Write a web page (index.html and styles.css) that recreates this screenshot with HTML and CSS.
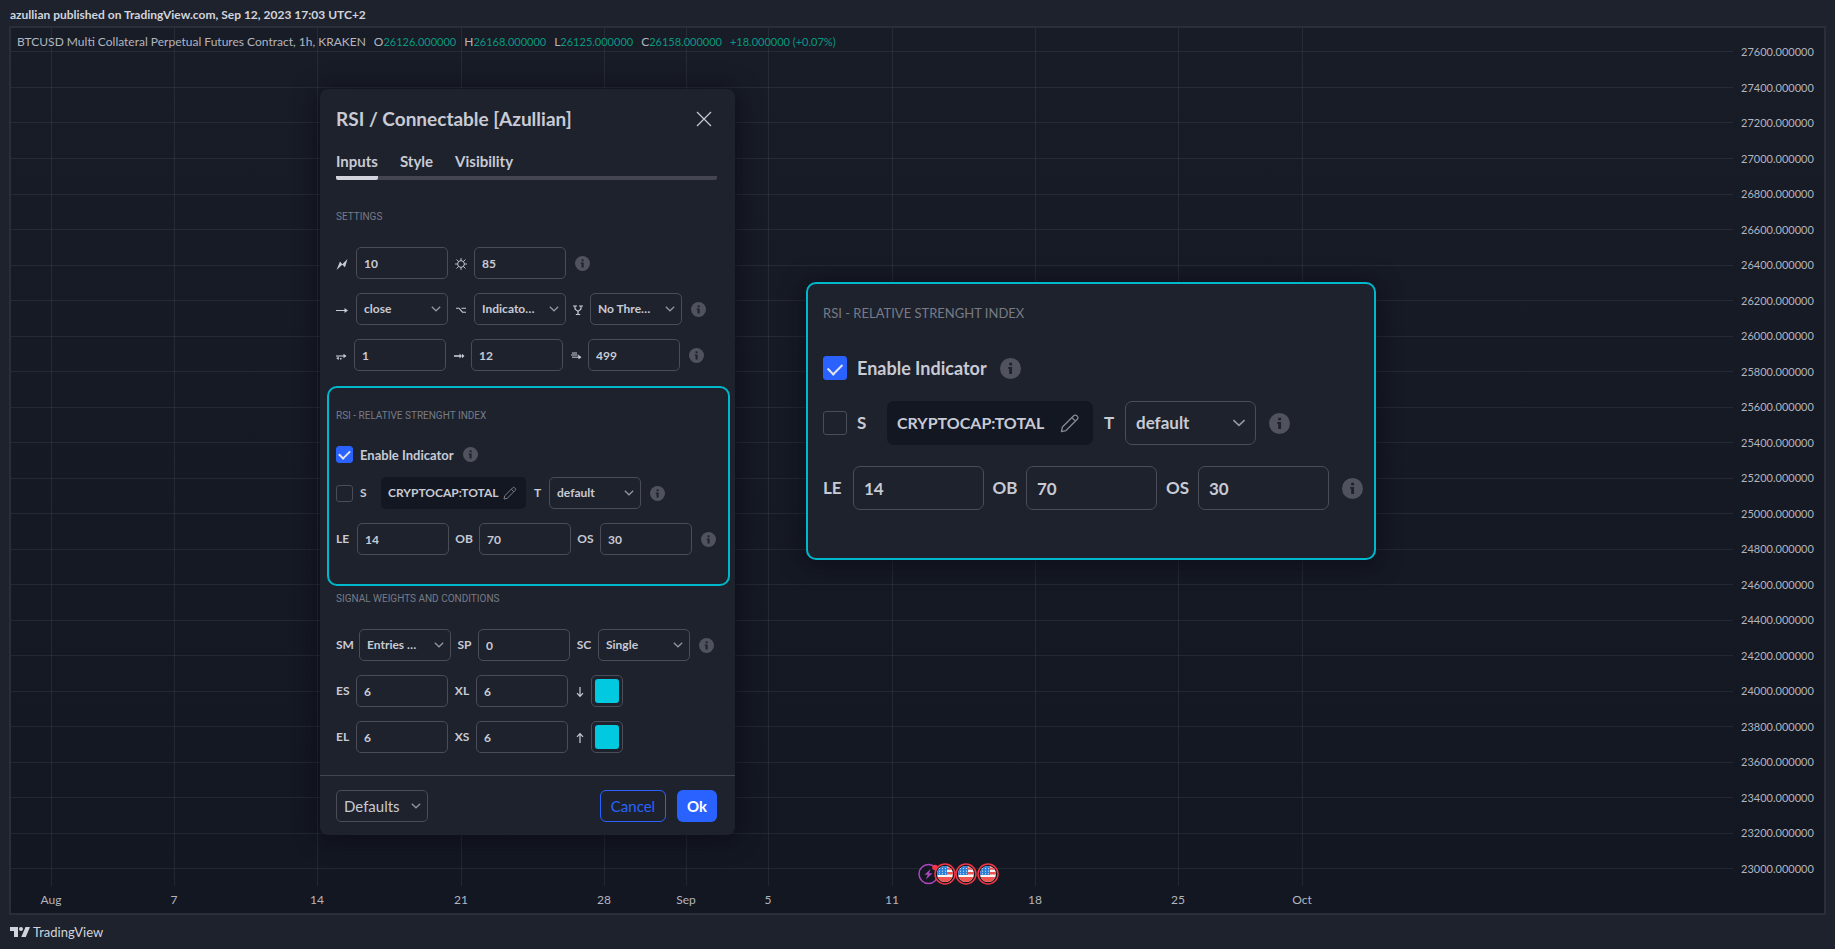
FILE: index.html
```html
<!DOCTYPE html>
<html lang="en">
<head>
<meta charset="utf-8">
<title>BTCUSD – RSI / Connectable [Azullian]</title>
<link rel="stylesheet" href="styles.css">
</head>
<body>
<svg class="sprite" aria-hidden="true">
  <symbol id="info" viewBox="0 0 16 16"><circle cx="8" cy="8" r="8" fill="#50535e"/><rect x="7" y="3.6" width="2.2" height="2" fill="#1e222d"/><path d="M6.2 6.8h3v5.4H7V8.2h-.8z" fill="#1e222d"/></symbol>
  <symbol id="chevron" viewBox="0 0 10 6"><path d="M.8.8 5 4.8 9.2.8" fill="none" stroke="currentColor" stroke-width="1.2"/></symbol>
  <symbol id="pencil" viewBox="0 0 14 14"><path d="M1 13l.7-3.2 7.9-7.9a1.5 1.5 0 0 1 2.2 0l.3.3a1.5 1.5 0 0 1 0 2.2L4.200 12.300zM8.300 3.200l2.500 2.500" fill="none" stroke="currentColor" stroke-width=".9" stroke-linejoin="round"/></symbol>
  <symbol id="bolt" viewBox="0 0 12 12"><path d="M.5 12 4 3.500 6.300 6.300 11.500 1 9 9.300 6.200 6.800z" fill="currentColor"/></symbol>
  <symbol id="gear" viewBox="0 0 12 12"><circle cx="6" cy="6" r="3.400" fill="none" stroke="currentColor"/><path d="M6 0v2.500M6 9.500V12M0 6h2.500M9.500 6H12M1.500 1.500l2 2M8.500 8.500l2 2M10.500 1.500l-2 2M3.500 8.500l-2 2" stroke="currentColor" stroke-width=".9"/></symbol>
  <symbol id="arrow" viewBox="0 0 12 12"><path d="M0 6.500h10" stroke="currentColor" stroke-width="1"/><path d="M8.500 4 12 6.500 8.500 9z" fill="currentColor"/></symbol>
  <symbol id="option" viewBox="0 0 12 12"><path d="M1 4.200h3l3.500 4H11M6.500 4.200H11" fill="none" stroke="currentColor" stroke-width="1.100"/></symbol>
  <symbol id="fork" viewBox="0 0 12 12"><path d="M1 2h4M7 2h4M3 2v2.500C3 6.500 6 6 6 8v2M9 2v2.500C9 6.500 6 6 6 8M3.800 10.500h4.400" fill="none" stroke="currentColor" stroke-width="1.200"/></symbol>
  <symbol id="swap" viewBox="0 0 12 12"><path d="M0 6h9" stroke="currentColor" stroke-width="1.100"/><path d="M7.500 3.700l3 2.300-3 2.300z" fill="currentColor"/><path d="M2.800 6.500v3.500L.2 8.200zM4 8h1.500v1.400H4z" fill="currentColor"/></symbol>
  <symbol id="thick" viewBox="0 0 12 12"><path d="M1 6h6" stroke="currentColor" stroke-width="1.600"/><path d="M6.500 3.500 9 6 6.500 8.500zM9 3.800 11.500 6 9 8.200z" fill="currentColor"/></symbol>
  <symbol id="double" viewBox="0 0 12 12"><path d="M2 3h5M1 5h6.500M2 7.200h7" stroke="currentColor" stroke-width="1"/><path d="M8 4.500 11.500 7.200 8.500 9.200z" fill="currentColor"/></symbol>
  <symbol id="down" viewBox="0 0 12 12"><path d="M6 1v9M3 7.200l3 3.200 3-3.200" fill="none" stroke="currentColor" stroke-width="1.200"/></symbol>
  <symbol id="up" viewBox="0 0 12 12"><path d="M6 11V2M3 4.800l3-3.200 3 3.200" fill="none" stroke="currentColor" stroke-width="1.200"/></symbol>
  <symbol id="flag" viewBox="0 0 22 22">
    <circle cx="11" cy="11" r="10" fill="#131722" stroke="#f23645" stroke-width="1.500"/>
    <g clip-path="url(#disc)"><path fill="#f5f5f5" d="M3 3h16v16H3z"/><path fill="#ef5350" d="M12 4.500h7v2.300h-7zM12 9h7v2.500h-7zM3 14h16v5H3z"/><path fill="#2f80d8" d="M3 3h10v9H3z"/><path stroke="#e6f0fa" stroke-width=".9" stroke-dasharray="1 2" d="M5 5.500h8M5 8.200h8M5 10.800h8"/></g>
  </symbol>
  <clipPath id="disc"><circle cx="11" cy="11" r="8"/></clipPath>
</svg>

<header class="published">azullian published on TradingView.com, Sep 12, 2023 17:03 UTC+2</header>

<main class="chart">
  <section class="plot" aria-label="Chart">
    <svg class="grid" viewBox="0 0 1722 858" preserveAspectRatio="none" aria-hidden="true">
      <path d="M40.500 0V858M163.500 0V858M306.500 0V858M450.500 0V858M593.500 0V858M675.500 0V858M757.500 0V858M881.500 0V858M1024.500 0V858M1167.500 0V858M1291.500 0V858"/>
      <path d="M0 23.500H1722M0 59.500H1722M0 94.500H1722M0 130.500H1722M0 166.500H1722M0 201.500H1722M0 237.500H1722M0 272.500H1722M0 308.500H1722M0 343.500H1722M0 379.500H1722M0 414.500H1722M0 450.500H1722M0 485.500H1722M0 521.500H1722M0 556.500H1722M0 592.500H1722M0 627.500H1722M0 663.500H1722M0 698.500H1722M0 734.500H1722M0 769.500H1722M0 805.500H1722M0 840.500H1722"/>
    </svg>
    <div class="legend">
      <span class="legend-name">BTCUSD Multi Collateral Perpetual Futures Contract, 1h, KRAKEN</span>
      <span>O<b>26126.000000</b></span>
      <span>H<b>26168.000000</b></span>
      <span>L<b>26125.000000</b></span>
      <span>C<b>26158.000000</b></span>
      <span><b>+18.000000 (+0.07%)</b></span>
    </div>
    <svg class="events" viewBox="0 0 82 24" aria-hidden="true">
      <circle cx="11.500" cy="12" r="9.500" fill="#131722" stroke="#ab47bc" stroke-width="1.500"/>
      <path d="M13.500 7 7.500 12.800h3.200L9 17.500l6.500-6.200h-3.400z" fill="#ab47bc"/>
      <circle cx="18" cy="5.500" r="2.800" fill="#f23645"/>
      <use href="#flag" x="17" y="1" width="22" height="22"/>
      <use href="#flag" x="38" y="1" width="22" height="22"/>
      <use href="#flag" x="60" y="1" width="22" height="22"/>
    </svg>
  </section>
  <div class="prices">
    <span>27600.000000</span><span>27400.000000</span><span>27200.000000</span><span>27000.000000</span><span>26800.000000</span><span>26600.000000</span><span>26400.000000</span><span>26200.000000</span><span>26000.000000</span><span>25800.000000</span><span>25600.000000</span><span>25400.000000</span><span>25200.000000</span><span>25000.000000</span><span>24800.000000</span><span>24600.000000</span><span>24400.000000</span><span>24200.000000</span><span>24000.000000</span><span>23800.000000</span><span>23600.000000</span><span>23400.000000</span><span>23200.000000</span><span>23000.000000</span>
  </div>
  <div class="times">
    <i></i><span>Aug</span><span>7</span><span>14</span><span>21</span><span>28</span><span>Sep</span><span>5</span><span>11</span><span>18</span><span>25</span><span>Oct</span>
  </div>
</main>

<footer class="brand">
  <svg width="20" height="10" viewBox="0 0 20 10" aria-hidden="true"><path d="M0 0h8v10H4V4H0z" fill="currentColor"/><circle cx="11" cy="2" r="2" fill="currentColor"/><path d="M15.500 0H20l-4.200 10h-4.500z" fill="currentColor"/></svg>
  <span>TradingView</span>
</footer>

<form class="dialog" aria-labelledby="dlg-title">
  <div class="dialog-head">
    <h1 id="dlg-title">RSI / Connectable [Azullian]</h1>
    <button type="button" class="close" aria-label="Close"><svg width="16" height="16" viewBox="0 0 16 16"><path d="M1 1l14 14M15 1 1 15" stroke="currentColor" stroke-width="1.200"/></svg></button>
  </div>
  <nav class="tabs">
    <button type="button" class="tab active">Inputs</button>
    <button type="button" class="tab">Style</button>
    <button type="button" class="tab">Visibility</button>
  </nav>

  <section class="group settings">
    <h2>SETTINGS</h2>
    <div class="row cols-a">
      <label for="a1" aria-label="Speed"><svg class="glyph"><use href="#bolt"/></svg></label><input class="box" id="a1" value="10">
      <label for="a2" aria-label="Brightness"><svg class="glyph"><use href="#gear"/></svg></label><input class="box" id="a2" value="85">
      <svg class="info"><use href="#info"/></svg>
    </div>
    <div class="row cols-a">
      <label for="b1" aria-label="Source"><svg class="glyph"><use href="#arrow"/></svg></label><span class="pick"><select class="box" id="b1"><option>close</option></select><svg><use href="#chevron"/></svg></span>
      <label for="b2" aria-label="Mode"><svg class="glyph"><use href="#option"/></svg></label><span class="pick"><select class="box" id="b2"><option>Indicato…</option></select><svg><use href="#chevron"/></svg></span>
      <label for="b3" aria-label="Threshold"><svg class="glyph"><use href="#fork"/></svg></label><span class="pick"><select class="box" id="b3"><option>No Thre…</option></select><svg><use href="#chevron"/></svg></span>
      <svg class="info"><use href="#info"/></svg>
    </div>
    <div class="row cols-b">
      <label for="c1" aria-label="From"><svg class="glyph"><use href="#swap"/></svg></label><input class="box" id="c1" value="1">
      <label for="c2" aria-label="To"><svg class="glyph"><use href="#thick"/></svg></label><input class="box" id="c2" value="12">
      <label for="c3" aria-label="Limit"><svg class="glyph"><use href="#double"/></svg></label><input class="box" id="c3" value="499">
      <svg class="info"><use href="#info"/></svg>
    </div>
  </section>

  <section class="group highlight">
    <h2>RSI - RELATIVE STRENGHT INDEX</h2>
    <div class="line enable"><input type="checkbox" id="d1" checked><label for="d1">Enable Indicator</label><svg class="info"><use href="#info"/></svg></div>
    <div class="line">
      <input type="checkbox" id="d2"><label for="d2" class="s-label">S</label>
      <button type="button" class="symbol">CRYPTOCAP:TOTAL<svg><use href="#pencil"/></svg></button>
      <label for="d3" class="t-label">T</label><span class="pick"><select class="box" id="d3"><option>default</option></select><svg><use href="#chevron"/></svg></span>
      <svg class="info"><use href="#info"/></svg>
    </div>
    <div class="row cols-c">
      <label for="e1">LE</label><input class="box" id="e1" value="14">
      <label for="e2">OB</label><input class="box" id="e2" value="70">
      <label for="e3">OS</label><input class="box" id="e3" value="30">
      <svg class="info"><use href="#info"/></svg>
    </div>
  </section>

  <section class="group signals">
    <h2>SIGNAL WEIGHTS AND CONDITIONS</h2>
    <div class="row cols-d">
      <label for="f1">SM</label><span class="pick"><select class="box" id="f1"><option>Entries …</option></select><svg><use href="#chevron"/></svg></span>
      <label for="f2">SP</label><input class="box" id="f2" value="0">
      <label for="f3">SC</label><span class="pick"><select class="box" id="f3"><option>Single</option></select><svg><use href="#chevron"/></svg></span>
      <svg class="info"><use href="#info"/></svg>
    </div>
    <div class="row cols-e">
      <label for="g1">ES</label><input class="box" id="g1" value="6">
      <label for="g2">XL</label><input class="box" id="g2" value="6">
      <label for="g3" aria-label="Short colour"><svg class="glyph"><use href="#down"/></svg></label><button type="button" class="swatch" id="g3"><i></i></button>
    </div>
    <div class="row cols-e">
      <label for="h1">EL</label><input class="box" id="h1" value="6">
      <label for="h2">XS</label><input class="box" id="h2" value="6">
      <label for="h3" aria-label="Long colour"><svg class="glyph"><use href="#up"/></svg></label><button type="button" class="swatch" id="h3"><i></i></button>
    </div>
  </section>

  <div class="actions">
    <span class="pick defaults"><select class="box" aria-label="Defaults"><option>Defaults</option></select><svg><use href="#chevron"/></svg></span>
    <button type="button" class="btn cancel">Cancel</button>
    <button type="button" class="btn ok">Ok</button>
  </div>
</form>

<form class="callout" aria-label="RSI detail">
  <h2>RSI - RELATIVE STRENGHT INDEX</h2>
  <div class="line enable"><input type="checkbox" id="k1" checked><label for="k1">Enable Indicator</label><svg class="info"><use href="#info"/></svg></div>
  <div class="line">
    <input type="checkbox" id="k2"><label for="k2" class="s-label">S</label>
    <button type="button" class="symbol">CRYPTOCAP:TOTAL<svg><use href="#pencil"/></svg></button>
    <label for="k3" class="t-label">T</label><span class="pick"><select class="box" id="k3"><option>default</option></select><svg><use href="#chevron"/></svg></span>
    <svg class="info"><use href="#info"/></svg>
  </div>
  <div class="row cols-big">
    <label for="l1">LE</label><input class="box" id="l1" value="14">
    <label for="l2">OB</label><input class="box" id="l2" value="70">
    <label for="l3">OS</label><input class="box" id="l3" value="30">
    <svg class="info"><use href="#info"/></svg>
  </div>
</form>
</body>
</html>
```
FILE: styles.css
```css
* { box-sizing: border-box; }

body {
  margin: 0;
  min-height: 100vh;
  display: flex;
  flex-direction: column;
  position: relative;
  padding: 0 9px;
  background: #1e222d;
  color: #d1d4dc;
  font: 12px/16px Lato, "Open Sans", sans-serif;
}

button, input, select { font: inherit; color: inherit; margin: 0; }
button { padding: 0; border: 0; background: none; cursor: pointer; }
h1, h2 { margin: 0; }
i, b { font-style: normal; font-weight: 400; }
.sprite { position: absolute; width: 0; height: 0; }

.published { height: 26px; padding: 7px 1px 0; font-weight: 700; font-size: 12px; line-height: 16px; }

/* Chart */
.chart {
  flex: 1;
  display: grid;
  grid-template-columns: 1fr 91px;
  grid-template-rows: 1fr 27px;
  border: 2px solid #2a2e39;
  background: linear-gradient(#181c27, #131722);
  color: #b2b5be;
}
.plot { position: relative; }
.grid { position: absolute; width: 100%; height: 100%; }
.grid path { fill: none; stroke: #f0f3fa; stroke-opacity: .07; vector-effect: non-scaling-stroke; }
.legend { position: relative; display: flex; gap: 8px; padding: 6px; white-space: nowrap; }
.legend b { color: #089981; font-size: 11px; }
.events { position: absolute; left: 52.6%; bottom: 0; width: 82px; height: 24px; }
.prices { display: flex; flex-direction: column; justify-content: space-between; align-items: flex-start; padding: 16px 0 9px 8px; font-size: 11px; }
.times {
  display: grid;
  grid-template-columns: 40fr 123fr 143fr 144fr 143fr 82fr 82fr 124fr 143fr 143fr 124fr 431fr;
  align-items: center;
}
.times span { width: 0; display: flex; justify-content: center; }

.brand { height: 34px; display: flex; align-items: center; gap: 3px; padding-left: 1px; font-size: 13px; }

/* Shared form parts */
.dialog, .callout { position: absolute; background: #1e222d; box-shadow: 0 2px 24px rgba(8, 9, 18, .7); font-weight: 700; color: #c8cad4; }
.row { display: grid; align-items: center; }
.row label { text-align: center; }
.row label:first-child { text-align: left; }
.glyph { width: 12px; height: 12px; display: inline-block; vertical-align: middle; }
.box { width: 100%; height: 32px; padding: 0 7px; border: 1px solid #4a4d58; border-radius: 5px; background: transparent; appearance: none; outline: 0; }
.pick { position: relative; width: 92px; }
.pick .box { display: block; }
.pick svg { position: absolute; right: 7px; top: 50%; width: 10px; height: 6px; margin-top: -3px; color: #9598a1; pointer-events: none; }
.info { width: 15px; height: 15px; }
.row .info { margin-left: 9px; }
.line { display: flex; align-items: center; }
h2 { font: 400 10px/12px Roboto, sans-serif; color: #787b86; }

input[type="checkbox"] { appearance: none; width: 17px; height: 17px; border: 1px solid #4a4d58; border-radius: 3px; display: grid; place-items: center; }
input[type="checkbox"]:checked { border-color: #2962ff; background: #2962ff; }
input[type="checkbox"]:checked::after { content: ""; width: 9px; height: 5px; border: solid #e3e6f0; border-width: 0 0 2px 2px; transform: translateY(-1px) rotate(-45deg); }

.symbol { display: flex; align-items: center; justify-content: space-between; width: 145px; height: 32px; padding: 0 9px 0 7px; border-radius: 5px; background: #131722; }
.symbol svg { width: 14px; height: 14px; color: #868993; }
.s-label { width: 21px; }
.t-label { width: 23px; text-align: center; }

/* Settings dialog */
.dialog { left: 320px; top: 89px; width: 415px; border-radius: 8px; display: flex; flex-direction: column; }
.dialog-head { display: flex; justify-content: space-between; align-items: center; height: 60px; padding: 0 23px 0 16px; }
.dialog-head h1 { font-size: 19px; line-height: 24px; }
.close { display: grid; }
.tabs { display: flex; gap: 22px; margin: 0 18px 0 16px; height: 31px; background: linear-gradient(#434651, #434651) 0 100% / 100% 4px no-repeat; border-radius: 2px; font-size: 15px; }
.tab { display: flex; padding-top: 3px; line-height: 18px; }
.tab.active { border-bottom: 4px solid #d1d4dc; border-radius: 2px; }
.group { display: flex; flex-direction: column; gap: 14px; }
.settings { padding: 31px 16px 0; }
.settings h2, .signals h2 { margin-bottom: 10px; }
.highlight { margin: 15px 5px 0 7px; padding: 22px 0 29px 7px; border: 2px solid #00b8cc; border-radius: 10px; }
.highlight .enable { margin-top: 10px; font-size: 13px; }
.line label:not(.t-label) { margin-left: 7px; }
.enable .info { margin-left: 9px; }
.pick + .info { margin-left: 9px; }
.signals { padding: 7px 16px 22px; }
.cols-a { grid-template-columns: 20px 92px 26px 92px 24px 92px auto; justify-content: start; }
.cols-b { grid-template-columns: 18px 92px 25px 92px 25px 92px auto; justify-content: start; }
.cols-c { grid-template-columns: 21px 92px 30px 92px 29px 92px auto; justify-content: start; }
.cols-d { grid-template-columns: 23px 92px 27px 92px 28px 92px auto; justify-content: start; }
.cols-e { grid-template-columns: 20px 92px 28px 92px 23px 32px; justify-content: start; }
.swatch { width: 32px; height: 32px; padding: 3px; border: 1px solid #4a4d58; border-radius: 5px; }
.swatch i { display: block; height: 100%; border-radius: 3px; background: #00c9e0; }
.actions { display: flex; align-items: center; gap: 11px; padding: 14px 18px 13px 16px; border-top: 1px solid #434651; font-size: 15px; font-weight: 400; }
.defaults { margin-right: auto; }
.btn { height: 32px; border-radius: 6px; }
.cancel { width: 66px; border: 1px solid #2962ff; color: #2962ff; }
.ok { width: 40px; background: #2962ff; color: #fff; font-weight: 700; }

/* Enlarged detail */
.callout { left: 806px; top: 282px; width: 570px; padding: 20px 15px 48px; border: 2px solid #00b8cc; border-radius: 10px; font-size: 17px; line-height: 24px; display: flex; flex-direction: column; gap: 21px; }
.callout h2 { font: 400 13px/18px Lato, sans-serif; margin-bottom: 13px; }
.callout .enable { font-size: 18px; }
.callout .box { height: 44px; padding: 0 10px; border-radius: 7px; }
.callout .pick { width: 131px; }
.callout .pick svg { width: 14px; height: 8px; margin-top: -4px; right: 10px; }
.callout .info { width: 21px; height: 21px; }
.callout input[type="checkbox"] { width: 24px; height: 24px; }
.callout input[type="checkbox"]:checked::after { width: 12px; height: 7px; }
.callout .line label:not(.t-label) { margin-left: 10px; }
.callout .enable .info, .callout .row .info, .callout .pick + .info { margin-left: 13px; }
.callout .s-label { width: 30px; }
.callout .t-label { width: 32px; }
.callout .symbol { width: 206px; height: 44px; padding: 0 13px 0 10px; border-radius: 7px; font-size: 16px; }
.callout .symbol svg { width: 20px; height: 20px; }
.cols-big { grid-template-columns: 30px 131px 42px 131px 41px 131px auto; justify-content: start; }
```
